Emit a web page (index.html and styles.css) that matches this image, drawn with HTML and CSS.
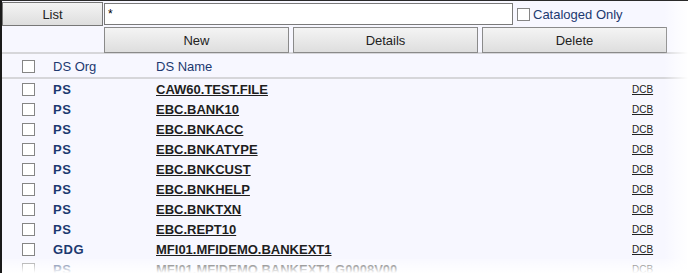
FILE: index.html
```html
<!DOCTYPE html>
<html lang="en">
<head>
    <title>Data Sets</title>
    <meta charset="utf-8">
    <link rel="stylesheet" href="styles.css">
</head>
<body>
    <div class="frame">
        <div class="toolbar">
            <button class="btn list-btn">List</button>
            <input class="filter" type="text" value="*">
            <label class="cataloged"><span class="box"></span>Cataloged Only</label>
        </div>
        <div class="actions">
            <button class="btn">New</button>
            <button class="btn">Details</button>
            <button class="btn">Delete</button>
        </div>

        <div class="row head">
            <span class="box"></span>
            <span class="org">DS Org</span>
            <span class="name">DS Name</span>
        </div>

        <div id="rows"></div>

        <div class="fade-right"></div>
        <div class="fade-bottom"></div>
    </div>

    <script>
    const datasets = [
        ['PS', 'CAW60.TEST.FILE'],
        ['PS', 'EBC.BANK10'],
        ['PS', 'EBC.BNKACC'],
        ['PS', 'EBC.BNKATYPE'],
        ['PS', 'EBC.BNKCUST'],
        ['PS', 'EBC.BNKHELP'],
        ['PS', 'EBC.BNKTXN'],
        ['PS', 'EBC.REPT10'],
        ['GDG', 'MFI01.MFIDEMO.BANKEXT1'],
        ['PS', 'MFI01.MFIDEMO.BANKEXT1.G0008V00']
    ];

    const rows = document.getElementById('rows');

    datasets.forEach(ds => {
        const row = document.createElement('div');
        row.className = 'row';
        row.innerHTML = `
            <span class="box"></span>
            <span class="org">${ds[0]}</span>
            <a class="name" href="#">${ds[1]}</a>
            <a class="dcb" href="#">DCB</a>
        `;
        rows.appendChild(row);
    });
    </script>
</body>
</html>
```

FILE: styles.css
```css
* {
    box-sizing: border-box;
}

body {
    margin: 0;
    background-color: white;
    font-family: "Liberation Sans", Arial, sans-serif;
}

.frame {
    position: relative;
    width: 688px;
    height: 273px;
    overflow: hidden;
    background-color: #f7f7ff;
    border-left: 2px solid #1a1a1a;
    border-top: 1px solid #2a2a2a;
}

.toolbar {
    display: flex;
    align-items: center;
    height: 25px;
    padding-top: 1px;
}

.btn {
    height: 26px;
    width: 185px;
    padding: 0;
    border: 1px solid #8a8a8a;
    background: linear-gradient(#f4f4f4, #dedede);
    font-family: inherit;
    font-size: 13px;
    color: #222;
}

.list-btn {
    width: 101px;
    height: 24px;
    border-color: #777;
}

.filter {
    width: 409px;
    height: 22px;
    margin-left: 1px;
    border: 1px solid #7a7a7a;
    background: white;
    padding: 0 3px;
    font-family: inherit;
    font-size: 12px;
    outline: none;
}

.cataloged {
    display: flex;
    align-items: center;
    margin-left: 4px;
    font-size: 13px;
    color: #1c3970;
}

.cataloged .box {
    margin-right: 3px;
}

.box {
    display: inline-block;
    width: 13px;
    height: 13px;
    border: 1px solid #858585;
    background: white;
}

.actions {
    display: flex;
    gap: 4px;
    padding-left: 102px;
    height: 28px;
    padding-top: 1px;
    border-bottom: 2px solid #d6d6da;
}

.row {
    display: flex;
    align-items: center;
    height: 20px;
    padding-left: 20px;
    font-size: 13px;
}

.row.head {
    height: 25px;
    padding-top: 1px;
    border-bottom: 2px solid #d6d6da;
}

.row .org {
    width: 103px;
    margin-left: 18px;
    font-weight: bold;
    letter-spacing: 0.5px;
    color: #1c3970;
}

.row.head .org {
    font-weight: normal;
    letter-spacing: 0;
}

.row .name {
    width: 476px;
    font-weight: bold;
    color: #1e1e1e;
}

.row.head .name {
    font-weight: normal;
    color: #1c3970;
}

.dcb {
    font-size: 10px;
    color: #222;
}

.fade-right {
    position: absolute;
    top: 0;
    right: 0;
    width: 24px;
    height: 100%;
    background: linear-gradient(to right, rgba(255, 255, 255, 0), white);
}

.fade-bottom {
    position: absolute;
    left: 0;
    bottom: 0;
    width: 100%;
    height: 14px;
    background: linear-gradient(rgba(255, 255, 255, 0.2), white);
}
```
